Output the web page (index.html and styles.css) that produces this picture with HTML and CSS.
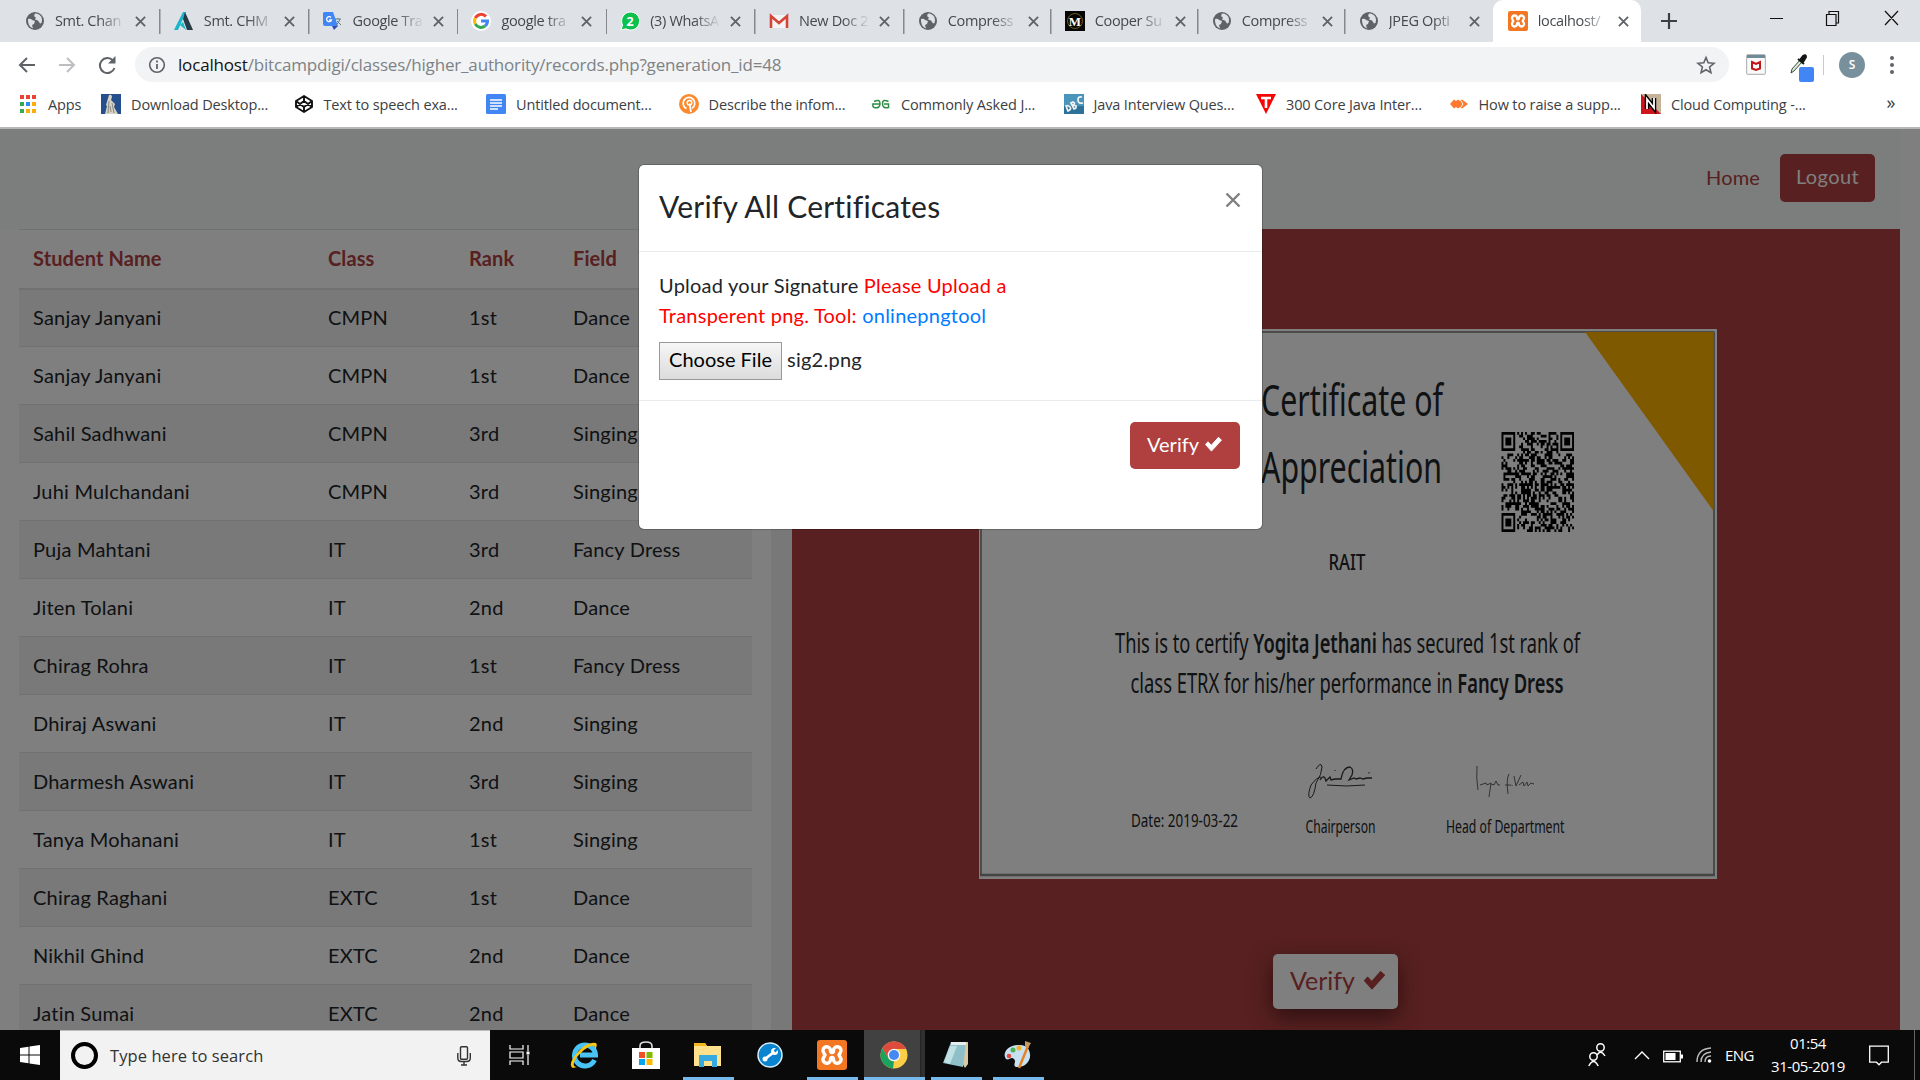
FILE: index.html
```html
<!DOCTYPE html>
<html lang="en">
<head>
<meta charset="utf-8">
<title>Records</title>
<link rel="stylesheet" href="styles.css">
</head>
<body>
<svg class="defs" width="0" height="0">
  <symbol id="globe" viewBox="0 0 20 20"><circle cx="10" cy="10" r="9" fill="#5f6368"/><path d="M3 8q3-1 4 1l3 1-1 3-2 1 1 3.500Q2.500 15.500 3 8zM10 2.500q-2 3 1 4l-1 2 3 1 2 3 1.500-.5Q18.500 5 12.500 2.800z" fill="#dee1e6"/></symbol>
  <symbol id="x" viewBox="0 0 12 12"><path d="M1 1l10 10M11 1L1 11" stroke="#5f6368" stroke-width="2"/></symbol>
  <symbol id="check" viewBox="0 0 20 18"><path d="M1 9.500L3.800 6.500 7.500 10.500 15.500 1.500 19 4.600 7.700 17z" fill="currentColor" stroke="currentColor" stroke-width="1" stroke-linejoin="round"/></symbol>
  <symbol id="xampp" viewBox="0 0 20 20"><rect width="20" height="20" rx="2" fill="#f37623"/><path d="M6.500 4.500a2.500 2.500 0 0 1 2.500 2.500q0 1.400 1 1.400T11 7a2.500 2.500 0 1 1 4.500 1.500l-.8 1.500.8 1.500A2.500 2.500 0 1 1 11 13q0-1.400-1-1.400T9 13a2.500 2.500 0 1 1-4.500-1.500l.8-1.500-.8-1.500a2.500 2.500 0 0 1 2-4z" fill="none" stroke="#fff" stroke-width="2.300"/></symbol>
</svg>

<header class="tabs">
  <div class="tab"><svg class="fav"><use href="#globe"/></svg><span class="tab-title">Smt. Chan</span><svg class="close"><use href="#x"/></svg></div>
  <div class="tab"><svg class="fav" viewBox="0 0 20 20"><path d="M9 1h3L4 19H0z" fill="#19b5cb"/><path d="M11 1l8 18h-6L9 8z" fill="#263c47"/><path d="M6 14l3-3 3 8z" fill="#19b5cb"/></svg><span class="tab-title">Smt. CHM</span><svg class="close"><use href="#x"/></svg></div>
  <div class="tab"><svg class="fav" viewBox="0 0 20 20"><path d="M8 5h9l1 12h-8z" fill="#dce0e4"/><path d="M1 1h9l5 14H2q-2 0-2-2V2z" fill="#4285f4"/><path d="M9 15h6l-4 4z" fill="#3050b8"/><path d="M8 6.500A2.500 2.500 0 1 0 8.500 9H6" fill="none" stroke="#fff" stroke-width="1.300"/><path d="M12 8h6M15 7v1M17 8q-1 4-4 6M14 10l4 4" stroke="#607d8b" fill="none"/></svg><span class="tab-title">Google Tra</span><svg class="close"><use href="#x"/></svg></div>
  <div class="tab"><svg class="fav" viewBox="0 0 20 20"><circle cx="10" cy="10" r="10" fill="#fff"/><g fill="none" stroke-width="3"><path d="M15 5.500A6.500 6.500 0 0 0 4.300 7" stroke="#ea4335"/><path d="M4.300 7a6.500 6.500 0 0 0 0 6" stroke="#fbbc05"/><path d="M4.300 13A6.500 6.500 0 0 0 14 15" stroke="#34a853"/><path d="M14 15a6 6 0 0 0 2.500-5H10" stroke="#4285f4"/></g></svg><span class="tab-title">google tra</span><svg class="close"><use href="#x"/></svg></div>
  <div class="tab"><svg class="fav" viewBox="0 0 20 20"><path d="M1 19l1.500-5A9 9 0 1 1 6 17.800z" fill="#0bc04b" stroke="#fff"/><text x="10" y="14.500" text-anchor="middle" class="fav-num">2</text></svg><span class="tab-title">(3) WhatsA</span><svg class="close"><use href="#x"/></svg></div>
  <div class="tab"><svg class="fav" viewBox="0 0 20 20"><path d="M1 4h18v13H1z" fill="#f3f3f3"/><path d="M2 17V5l8 7 8-7v12" fill="none" stroke="#d54437" stroke-width="2.600"/></svg><span class="tab-title">New Doc 2</span><svg class="close"><use href="#x"/></svg></div>
  <div class="tab"><svg class="fav"><use href="#globe"/></svg><span class="tab-title">Compress</span><svg class="close"><use href="#x"/></svg></div>
  <div class="tab"><svg class="fav" viewBox="0 0 20 20"><path d="M0 0h20v20H0z" fill="#050505"/><circle cx="10" cy="10" r="7.500" fill="none" stroke="#6c5b1c"/><text x="10" y="14.500" text-anchor="middle" class="fav-m">M</text></svg><span class="tab-title">Cooper Su</span><svg class="close"><use href="#x"/></svg></div>
  <div class="tab"><svg class="fav"><use href="#globe"/></svg><span class="tab-title">Compress</span><svg class="close"><use href="#x"/></svg></div>
  <div class="tab"><svg class="fav"><use href="#globe"/></svg><span class="tab-title">JPEG Opti</span><svg class="close"><use href="#x"/></svg></div>
  <div class="tab active"><svg class="fav"><use href="#xampp"/></svg><span class="tab-title">localhost/</span><svg class="close"><use href="#x"/></svg></div>
  <svg class="plus" viewBox="0 0 16 16"><path d="M8 0v16M0 8h16" stroke="#3c4043" stroke-width="2.200"/></svg>
  <svg class="winbtns" viewBox="0 0 130 20"><path d="M1 9.500h13M116 2l13 14M129 2l-13 14M57.500 5.500h9.500v11h-9.500zM60 5V2.500h9.500V14H67" fill="none" stroke="#111" stroke-width="1.200"/></svg>
</header>

<div class="toolbar">
  <svg class="nav-icons" viewBox="0 0 100 20"><g fill="none" stroke-width="2"><path d="M17 10H2M9 3l-7 7 7 7" stroke="#5f6368"/><path d="M41 10h15M49 3l7 7-7 7" stroke="#bcbec1"/><path d="M95 5.500A7.500 7.500 0 1 0 96.500 13" stroke="#5f6368"/></g><path d="M97.500 1v7.500H90z" fill="#5f6368"/></svg>
  <div class="omnibox">
    <svg class="info" viewBox="0 0 18 18"><circle cx="9" cy="9" r="7.300" fill="none" stroke="#5f6368" stroke-width="1.600"/><path d="M9 8v5M9 4.500v2" stroke="#5f6368" stroke-width="1.800"/></svg>
    <span class="url"><b>localhost</b>/bitcampdigi/classes/higher_authority/records.php?generation_id=48</span>
    <svg class="star" viewBox="0 0 20 20"><path d="M10 2.500l2.200 5.300 5.800.5-4.400 3.700 1.300 5.600L10 14.700l-4.900 2.900 1.300-5.600L2 8.300l5.800-.5z" fill="none" stroke="#5f6368" stroke-width="1.600"/></svg>
  </div>
  <svg class="ext" viewBox="0 0 20 21"><rect x=".7" y=".7" width="18.600" height="19.600" rx="1" fill="#fafafa" stroke="#a8a8a8"/><path d="M1 1h18v3H1z" fill="#708b98"/><path d="M6 8l4 2 4-2v6.500l-4 1.500-4-1.500z" fill="none" stroke="#c01818" stroke-width="2"/></svg>
  <svg class="dropper" viewBox="0 0 25 28"><path d="M2 19l1-4 8-9 2 2-8 9z" fill="#dfe9dc" stroke="#344c36"/><path d="M9 5l6 5M11 6l3-4q3-2 3 1l-3 5z" fill="#151515" stroke="#151515" stroke-width="2"/><rect x="10" y="13" width="15" height="15" rx="2" fill="#4285f4"/></svg>
  <i class="tb-sep"></i>
  <span class="avatar">S</span>
  <svg class="dots" viewBox="0 0 4 18"><circle cx="2" cy="2" r="2"/><circle cx="2" cy="9" r="2"/><circle cx="2" cy="16" r="2"/></svg>
</div>

<nav class="bookmarks">
  <div class="bm apps"><svg viewBox="0 0 20 20"><path d="M2 1h4v4H2zM8 1h4v4H8zM14 1h4v4h-4z" fill="#ea4335"/><path d="M2 8h4v4H2z" fill="#34a853"/><path d="M8 8h4v4H8z" fill="#2d8cf5"/><path d="M14 8h4v4h-4zM8 15h4v4H8zM14 15h4v4h-4z" fill="#fbad08"/><path d="M2 15h4v4H2z" fill="#34a853"/></svg><span>Apps</span></div>
  <div class="bm"><svg viewBox="0 0 20 20"><path d="M0 0h20v20H0z" fill="#254f8c"/><path d="M8 1q3-1 3 2l-1 3 4 4-1 3 4 7H4l2-8-1-1z" fill="#d6d2c5"/><path d="M8 7l-1 12M11 9l2 10M9 12l1 6" stroke="#8d897c" fill="none"/></svg><span>Download Desktop...</span></div>
  <div class="bm"><svg viewBox="0 0 20 20"><path d="M10 2l8 5v6l-8 5-8-5V7zM10 2v5M10 13v5M2 7l8 6 8-6M2 13l8-6 8 6" fill="none" stroke="#111" stroke-width="1.900" stroke-linejoin="round"/></svg><span>Text to speech exa...</span></div>
  <div class="bm"><svg viewBox="0 0 20 20"><rect width="20" height="20" rx="1.500" fill="#4285f4"/><path d="M4 6h12M4 9h12M4 12h12M4 15h8" stroke="#fff" stroke-width="1.400"/></svg><span>Untitled document...</span></div>
  <div class="bm"><svg viewBox="0 0 20 20"><circle cx="10" cy="10" r="10" fill="#fb8a2e"/><path d="M7.500 14.500a5.800 5.800 0 1 1 5.500-.3" fill="none" stroke="#fff" stroke-width="1.700"/><path d="M10.500 9.500L12 18" stroke="#fff" stroke-width="1.700"/><circle cx="10.500" cy="8.800" r="2.300" fill="none" stroke="#fff" stroke-width="1.400"/></svg><span>Describe the infom...</span></div>
  <div class="bm"><svg viewBox="0 0 20 20"><path d="M3 7.500q6-3 6 2.200T3 13.500Q1.500 12.500 1.800 10H9M17.500 7.500q-6-3-6 2.200t6 3.800V10H13" fill="none" stroke="#2f8d46" stroke-width="1.500"/></svg><span>Commonly Asked J...</span></div>
  <div class="bm"><svg viewBox="0 0 20 20"><path d="M0 0h20v20H0z" fill="#4a96bb"/><path d="M0 12h20v8H0z" fill="#2c7198"/><g fill="none" stroke="#f2f2f2" stroke-width="1.700"><path d="M2 12l2 5q4-2 2-4t-4-1zM7 9l3 6q3-1 2-3l-3-1q3-2 0-3zM18 3q-4-1-4 3t5 3"/></g></svg><span>Java Interview Ques...</span></div>
  <div class="bm"><svg viewBox="0 0 20 20"><path d="M0 0h20L10 20z" fill="#f60505"/><path d="M5 4h10M10 4v10" stroke="#fff" stroke-width="2.600"/></svg><span>300 Core Java Inter...</span></div>
  <div class="bm"><svg viewBox="0 0 20 20"><path d="M1 10l4-4.500 2 1.500 2-1.500 2 1.500 2-1.500L19 10l-6 4.500-2-1.500-2 1.500L7 13l-2 1.500z" fill="#ff7a2e"/><path d="M12 7l2 3-2 3" stroke="#fff" fill="none"/></svg><span>How to raise a supp...</span></div>
  <div class="bm"><svg viewBox="0 0 20 20"><path d="M0 0h20v20H0z" fill="#c6b297"/><path d="M0 0l20 20H0z" fill="#d0151f"/><path d="M6 15V5l7 9V4" fill="none" stroke="#000" stroke-width="4.500"/><path d="M6 15V5l7 9V4" fill="none" stroke="#fff" stroke-width="1.800"/></svg><span>Cloud Computing -...</span></div>
  <span class="more">»</span>
</nav>

<main class="page">
  <div class="site">
    <div class="navbar"><span class="home">Home</span><span class="logout">Logout</span></div>
    <div class="content">
      <div class="list">
        <table>
          <thead><tr><th class="c1">Student Name</th><th class="c2">Class</th><th class="c3">Rank</th><th>Field</th></tr></thead>
          <tbody>
            <tr><td>Sanjay Janyani</td><td>CMPN</td><td>1st</td><td>Dance</td></tr>
            <tr><td>Sanjay Janyani</td><td>CMPN</td><td>1st</td><td>Dance</td></tr>
            <tr><td>Sahil Sadhwani</td><td>CMPN</td><td>3rd</td><td>Singing</td></tr>
            <tr><td>Juhi Mulchandani</td><td>CMPN</td><td>3rd</td><td>Singing</td></tr>
            <tr><td>Puja Mahtani</td><td>IT</td><td>3rd</td><td>Fancy Dress</td></tr>
            <tr><td>Jiten Tolani</td><td>IT</td><td>2nd</td><td>Dance</td></tr>
            <tr><td>Chirag Rohra</td><td>IT</td><td>1st</td><td>Fancy Dress</td></tr>
            <tr><td>Dhiraj Aswani</td><td>IT</td><td>2nd</td><td>Singing</td></tr>
            <tr><td>Dharmesh Aswani</td><td>IT</td><td>3rd</td><td>Singing</td></tr>
            <tr><td>Tanya Mohanani</td><td>IT</td><td>1st</td><td>Singing</td></tr>
            <tr><td>Chirag Raghani</td><td>EXTC</td><td>1st</td><td>Dance</td></tr>
            <tr><td>Nikhil Ghind</td><td>EXTC</td><td>2nd</td><td>Dance</td></tr>
            <tr><td>Jatin Sumai</td><td>EXTC</td><td>2nd</td><td>Dance</td></tr>
          </tbody>
        </table>
      </div>
      <div class="gutter"></div>
      <section class="preview">
        <svg class="cert" viewBox="979 329 738 550">
          <rect x="979" y="329" width="738" height="550" fill="#fff"/>
          <path d="M981 332H1714.500M981 331V876M1714 332V876" fill="none" stroke="#999" stroke-width="2"/>
          <path d="M980 875H1715" stroke="#888" stroke-width="2.500"/>
          <path d="M1585 332h128.500v179z" fill="#ffb300"/>
          <g class="cert-text">
            <text x="1261" y="416" font-size="43" textLength="182" lengthAdjust="spacingAndGlyphs">Certificate of</text>
            <text x="1261" y="483" font-size="43" textLength="181" lengthAdjust="spacingAndGlyphs">Appreciation</text>
            <text x="1328.500" y="570" font-size="22.500" textLength="37" lengthAdjust="spacingAndGlyphs" class="rait">RAIT</text>
            <text x="1115" y="652.500" font-size="27" textLength="465" lengthAdjust="spacingAndGlyphs">This is to certify <tspan class="strong">Yogita Jethani</tspan> has secured 1st rank of</text>
            <text x="1130.500" y="693" font-size="27" textLength="433" lengthAdjust="spacingAndGlyphs">class ETRX for his/her performance in <tspan class="strong">Fancy Dress</tspan></text>
            <text x="1131" y="827" font-size="17.500" textLength="107" lengthAdjust="spacingAndGlyphs">Date: 2019-03-22</text>
            <text x="1305.500" y="833" font-size="17.500" textLength="70" lengthAdjust="spacingAndGlyphs">Chairperson</text>
            <text x="1446" y="833" font-size="17.500" textLength="118.500" lengthAdjust="spacingAndGlyphs">Head of Department</text>
          </g>
          <g fill="none" stroke="#333" stroke-width="1">
            <path d="M1316 769q5-8 6-2 0 7-6 16-2 14-6 15-3-2 1-13 6-8 10-8"/>
            <path d="M1320 780q3-5 5-2l1 3 4-4 1 3 4-1h6q2-12 9-12 4 2 2 8l-3 5 5-2 2 1 4-1 3 1 4-1h5" stroke-width="1.300"/>
            <path d="M1327 785q20 2 38 0M1335 770v1M1369 772v1.500"/>
            <path d="M1477 766q-1 12 1 24M1480 785l6-2 1 2 4-2-2 14M1491 784l3 1 2-4 2 4h2M1509 774q-3 5-1 20M1505 785h6M1512 785v1M1514 776l2 10 5-11M1519 785l4-3 1 4 3-4 1 4 3-3 3 1" stroke="#555" stroke-width=".9"/>
          </g>
          <g id="qr" transform="translate(1501.500 432) scale(1.960 2.703)"></g>
        </svg>
        <span class="verify-lg">Verify <svg><use href="#check"/></svg></span>
      </section>
    </div>
  </div>
  <div class="backdrop">
    <div class="modal">
      <div class="m-head"><h5>Verify All Certificates</h5><svg class="m-close" viewBox="0 0 16 16"><path d="M1.500 1.500l13 13M14.500 1.500l-13 13" stroke="#7f7f7f" stroke-width="2.400"/></svg></div>
      <div class="m-body">
        <p>Upload your Signature <em>Please Upload a<br>Transperent png. Tool: <a>onlinepngtool</a></em></p>
        <div class="file"><span class="choose">Choose File</span><span class="fname">sig2.png</span></div>
      </div>
      <div class="m-foot"><span class="verify">Verify <svg><use href="#check"/></svg></span></div>
    </div>
  </div>
</main>

<footer class="taskbar">
  <div class="start"><svg viewBox="0 0 20 20"><path d="M0 3l8.500-1.300v7.800H0zM9.500 1.500L20 0v9.500H9.500zM0 10.500h8.500v7.800L0 17zM9.500 10.500H20V20L9.500 18.500z" fill="#fff"/></svg></div>
  <div class="search"><i class="cortana"></i><span>Type here to search</span><svg viewBox="0 0 14 20"><rect x="3.500" y=".7" width="7" height="12.500" rx="1" fill="none" stroke="#333" stroke-width="1.400"/><path d="M.8 7v5q0 3.500 3.500 3.500h5.500q3.500 0 3.500-3.500V7M7 15.500V19M4 19h6" fill="none" stroke="#333" stroke-width="1.400"/></svg></div>
  <div class="app tv"><svg viewBox="0 0 28 28"><path d="M4 4v4h13V4M4 24v-4h13v4M4 11h13v6H4zM22 4v6M22 14v10" fill="none" stroke="#fff" stroke-width="1.200"/><path d="M20.500 10.500h3v3h-3z" fill="#fff"/></svg></div>
  <div class="app"><svg viewBox="0 0 28 28"><path d="M24.500 19A10.500 10.500 0 1 1 25.500 14H10" fill="none" stroke="#49c3f3" stroke-width="5"/><path d="M3 27Q-3 24 7 12T26 2q2 2-1 7 1-5-4-4T6 17Q1 26 7 26z" fill="#f8c416"/></svg></div>
  <div class="app"><svg viewBox="0 0 28 28"><path d="M8 8V5q0-4 6-4t6 4v3" fill="none" stroke="#ddd" stroke-width="1.600"/><path d="M0 7h28v21H0z" fill="#fff"/><path d="M7 11h6v6H7z" fill="#f25022"/><path d="M14.500 11h6v6h-6z" fill="#7fba00"/><path d="M7 18h6v6H7z" fill="#00a4ef"/><path d="M14.500 18h6v6h-6z" fill="#ffb900"/></svg></div>
  <div class="app run"><svg viewBox="0 0 28 28"><path d="M0 2h11l2 3h14v20H0z" fill="#ffe18b"/><path d="M0 2h11l2 3H0z" fill="#f0b81f"/><path d="M5 14h18v12h-5v-6h-8v6H5z" fill="#36a9e1"/></svg></div>
  <div class="app"><svg viewBox="0 0 28 28"><circle cx="14" cy="14" r="12" fill="#0b84cf" stroke="#d8eefa" stroke-width="1.500"/><path d="M9 18l9-7" stroke="#fff" stroke-width="2.800"/><circle cx="9" cy="18" r="2.500" fill="#fff"/><circle cx="18.500" cy="10.500" r="3.500" fill="#fff"/><path d="M18.500 10.500l4-4" stroke="#0b84cf" stroke-width="2.500"/></svg></div>
  <div class="app run"><svg class="big"><use href="#xampp"/></svg></div>
  <div class="app run chrome"><svg viewBox="0 0 28 28"><circle cx="14" cy="14" r="13.500" fill="#fbcf45"/><path d="M2.300 7.200A13.500 13.500 0 0 1 26 8H14L8 17z" fill="#dc4b3e"/><path d="M2.300 7.200L8.500 17.500 14 20l-1 7.500A13.500 13.500 0 0 1 2.300 7.200z" fill="#1ba160"/><circle cx="14" cy="14" r="6.300" fill="#f5f5f5"/><circle cx="14" cy="14" r="5" fill="#4688f1"/></svg></div>
  <div class="app run"><svg viewBox="0 0 28 28"><path d="M9 2l17-1v22l-3 4z" fill="#d8cba4"/><path d="M9 1h15l-3 25-20-4z" fill="#8fc0c9"/><path d="M9 1h15v3H9z" fill="#e8eeee"/><path d="M8 5h7L8 23l-6-2z" fill="#c1e0e4"/></svg></div>
  <div class="app run"><svg viewBox="0 0 28 28"><path d="M14 4C3 4-2 13 2 18c3 2 5-3 8 0s-2 6 2 8c8 1 15-5 14-13S20 4 14 4z" fill="#c7e1f2"/><circle cx="5" cy="15" r="2.300" fill="#e3493f"/><circle cx="9" cy="9" r="2.500" fill="#52b157"/><circle cx="15" cy="7" r="2.500" fill="#f3b126"/><path d="M24 5l-9 22" stroke="#e68325" stroke-width="2.500"/><path d="M21 0l6 2-3 5-3-2z" fill="#c49a62"/></svg></div>
  <div class="tray">
    <svg class="people" viewBox="0 0 18 24"><g fill="none" stroke="#fff" stroke-width="1.500"><circle cx="12.500" cy="4.500" r="3.700"/><path d="M9 12q4-6 8 1"/><circle cx="5.500" cy="13.500" r="3.700"/><path d="M.8 23q4.700-9 9.400 0"/></g></svg>
    <svg class="caret" viewBox="0 0 16 10"><path d="M1 9l7-7 7 7" fill="none" stroke="#fff" stroke-width="1.400"/></svg>
    <svg class="batt" viewBox="0 0 20 12"><rect x=".7" y=".7" width="16.600" height="10.600" fill="none" stroke="#fff" stroke-width="1.300"/><path d="M2.500 2.500h10v7h-10zM18 4h2v4h-2z" fill="#fff"/></svg>
    <svg class="wifi" viewBox="0 0 16 16"><g fill="none" stroke="#bbb" stroke-width="1.400"><path d="M1 15Q1 2 15 1M5 15Q5 6 15 5M9 15q0-6 6-6"/></g><circle cx="13.500" cy="14" r="1.800" fill="#fff"/></svg>
    <span class="eng">ENG</span>
    <span class="clock">01:54<br>31-05-2019</span>
    <svg class="note" viewBox="0 0 20 20"><path d="M.7.700h18.600v16H12.500L10 19.300 7.500 16.700H.7z" fill="none" stroke="#fff" stroke-width="1.300"/></svg>
    <i class="peek"></i>
  </div>
</footer>
<script src="script.js"></script>
</body>
</html>
```
FILE: styles.css
```css
* { box-sizing: border-box; }
body { margin: 0; width: 1920px; height: 1080px; overflow: hidden; display: flex; flex-direction: column; font-family: "Open Sans", "Noto Sans", sans-serif; background: #fff; }
svg { flex: none; display: block; }
.defs { display: none; }

/* tab strip */
.tabs { height: 42px; flex: none; background: #dee1e6; display: flex; align-items: center; padding-left: 12px; }
.tab { width: 147px; height: 42px; flex: none; display: flex; align-items: center; padding-left: 13px; background: linear-gradient(#85888c, #85888c) right 0 center / 1.500px 25px no-repeat; }
.tab:nth-child(-n+6) { width: 148.800px; }
.tab:nth-child(10) { background: none; }
.tab.active { width: 148px; padding-left: 15px; background: #fff; border-radius: 10px 10px 0 0; }
.fav { width: 20px; height: 20px; margin-right: 10px; }
.tab-title { width: 71px; white-space: nowrap; font-size: 14.500px; line-height: 20px; letter-spacing: -.35px; color: #45494d; margin-top: -1px; -webkit-mask-image: linear-gradient(90deg, #000 62%, transparent 100%); }
.close { width: 11px; height: 11px; margin-left: 9px; }
.fav-num { font: bold 13px "Open Sans", sans-serif; fill: #fff; }
.fav-m { font: bold 13px "Liberation Serif", serif; fill: #fff; }
.plus { width: 16px; height: 16px; margin-left: 20px; }
.winbtns { width: 130px; height: 20px; margin-left: 92px; margin-bottom: 4px; }

/* toolbar */
.toolbar { height: 45px; flex: none; display: flex; align-items: center; padding-left: 18px; background: #fff; }
.nav-icons { width: 100px; height: 20px; }
.omnibox { width: 1594px; height: 35px; margin-left: 17px; border-radius: 18px; background: #f1f3f4; display: flex; align-items: center; padding: 0 13px; }
.info { width: 18px; height: 18px; }
.url { flex: 1; margin-left: 12px; font-size: 17px; letter-spacing: -.17px; color: #7d8287; white-space: nowrap; }
.url b { font-weight: 400; color: #111; }
.star { width: 20px; height: 20px; }
.ext { width: 20px; height: 21px; margin-left: 17px; }
.dropper { width: 25px; height: 28px; margin: 7px 0 0 23px; }
.tb-sep { width: 1px; height: 20px; background: #c8cacd; margin-left: 9px; }
.avatar { width: 26px; height: 26px; border-radius: 50%; background: #78909c; color: #fff; font-size: 12px; font-weight: 600; line-height: 26px; text-align: center; margin-left: 15px; }
.dots { width: 4px; height: 18px; margin-left: 25px; fill: #5f6368; }

/* bookmarks */
.bookmarks { height: 42px; flex: none; display: flex; align-items: center; padding: 0 0 6px 18px; border-bottom: 2px solid #b4b6b8; font-size: 14.500px; letter-spacing: -.14px; color: #3c4043; }
.bm { width: 192.500px; flex: none; display: flex; align-items: center; gap: 10px; white-space: nowrap; }
.bm svg { width: 20px; height: 20px; overflow: hidden; }
.bm.apps { width: 83px; }
.more { font-size: 18px; margin-left: 53px; margin-top: -5px; }

/* page */
.page { height: 901px; flex: none; position: relative; overflow: hidden; font-family: Lato, "Noto Sans", sans-serif; font-size: 20px; color: #212529; }
.site { width: 1900px; }
.navbar { height: 100px; background: #f6fcf9; display: flex; align-items: flex-start; justify-content: flex-end; padding: 25px 25px 0 0; }
.home { color: #b04040; line-height: 46px; margin-right: 20px; letter-spacing: .15px; }
.logout { width: 95px; height: 48px; line-height: 45px; letter-spacing: .4px; border-radius: 5px; background: #b04040; color: #fff; text-align: center; }
.content { display: flex; height: 801px; overflow: hidden; }
.list { width: 771px; padding-left: 19px; }
.gutter { width: 21px; background: #f1f1f1; }
table { width: 733px; border-collapse: collapse; table-layout: fixed; }
th, td { text-align: left; padding: 0 15px 2px 14px; height: 58px; line-height: 30px; border-top: 1.500px solid #dee2e6; letter-spacing: .2px; }
th { color: #b04040; height: 59px; border-bottom: 2px solid #dee2e6; letter-spacing: .1px; }
.c1 { width: 295px; } .c2 { width: 141px; } .c3 { width: 104px; }
tbody tr:nth-child(odd) { background: #f2f2f2; }
.preview { width: 1108px; background: #b04040; display: flex; flex-direction: column; align-items: flex-start; padding: 100px 0 0 187px; }
.cert { width: 738px; height: 550px; }
.cert-text { font-family: "Noto Sans", sans-serif; fill: #212529; }
.rait { font-weight: 500; }
.strong { font-weight: 600; }
.verify-lg { display: flex; align-items: center; gap: 8px; width: 125px; height: 55px; margin: 75px 0 0 294px; padding: 0 0 3px 17px; background: #fff; color: #b04040; border-radius: 5px; font-size: 25px; box-shadow: 0 8px 22px rgba(0,0,0,.5); }
.verify-lg svg { width: 23px; height: 20px; }

/* dialog */
.backdrop { position: absolute; inset: 0; background: rgba(0,0,0,.5); }
.modal { width: 625px; height: 366px; margin: 35px 0 0 638px; background: #fff; border: 1px solid rgba(0,0,0,.2); background-clip: padding-box; border-radius: 6px; }
.m-head { height: 87px; border-bottom: 1px solid #e9ecef; display: flex; justify-content: space-between; padding: 19px 21px 0 20px; }
.m-head h5 { margin: 0; font-weight: 400; font-size: 30px; line-height: 44px; letter-spacing: .2px; }
.m-close { width: 16px; height: 16px; margin-top: 8px; }
.m-body { height: 149px; border-bottom: 1px solid #e9ecef; padding: 18px 20px 0; }
.m-body p { margin: 0; line-height: 30px; letter-spacing: .23px; }
.m-body em { font-style: normal; color: #f00; }
.m-body a { color: #007bff; }
.file { display: flex; align-items: center; gap: 5px; margin-top: 12px; }
.choose { width: 123px; height: 38px; line-height: 33px; text-align: center; color: #000; border: 1px solid #999; background: linear-gradient(#f6f6f6, #dcdcdc); }
.fname { margin-top: -4px; letter-spacing: .25px; }
.m-foot { display: flex; justify-content: flex-end; padding: 21px 22px 0; }
.verify { width: 110px; height: 47px; display: flex; align-items: center; gap: 5px; padding: 0 0 3px 17px; border-radius: 5px; background: #b04040; color: #fff; }
.verify svg { width: 19px; height: 16px; }

/* taskbar */
.taskbar { height: 50px; flex: none; background: #0a0a0a; display: flex; color: #fff; }
.start { width: 60px; padding: 15px 0 0 20px; }
.start svg { width: 20px; height: 20px; }
.search { width: 430px; background: #f2f2f2; border-top: 1px solid #bbb; display: flex; align-items: center; padding-left: 11px; color: #333; font-size: 16.500px; letter-spacing: .08px; }
.search span { flex: 1; margin-left: 12px; }
.search svg { width: 14px; height: 20px; margin-right: 19px; }
.cortana { width: 27px; height: 27px; border: 4px solid #000; border-radius: 50%; }
.app { width: 51px; height: 50px; margin-right: 11px; display: flex; justify-content: center; align-items: center; padding-right: 2px; }
.app svg { width: 28px; height: 28px; }
.app svg.big { width: 30px; height: 30px; }
.app.tv { margin-left: 7px; padding-right: 5px; }
.run { border-bottom: 3px solid #76b9ed; }
.run svg { margin-top: 3px; }
.app.chrome { width: 61px; margin: 0 6px 0 -5px; background: linear-gradient(90deg, #414141 56px, #222 56px, #303030 58px); }
.tray { flex: 1; display: flex; align-items: center; justify-content: flex-end; }
.people { width: 18px; height: 24px; }
.caret { width: 16px; height: 10px; margin-left: 28px; }
.batt { width: 20px; height: 13px; margin: 2px 0 0 13px; }
.wifi { width: 16px; height: 16px; margin-left: 13px; }
.eng { width: 30px; font-size: 15px; letter-spacing: -.6px; margin-left: 13px; }
.clock { width: 80px; margin-left: 13px; text-align: center; font-size: 15px; letter-spacing: -.45px; line-height: 23px; white-space: nowrap; }
.note { width: 20px; height: 21px; margin-left: 21px; }
.peek { width: 1px; height: 50px; background: #666; margin: 0 5px 0 25px; }
```
FILE: script.js
```js
// Draws the certificate's QR code, 37 x 37 modules, as one path.
(function () {
  var n = 37, seed = 48, d = "";
  function rnd() { seed = (seed * 1103515245 + 12345) % 2147483648; return seed / 2147483648; }
  function finder(x, y, fx, fy) {
    var i = x - fx, j = y - fy;
    if (i < -1 || j < -1 || i > 7 || j > 7) return null;
    if (i < 0 || j < 0 || i > 6 || j > 6) return false;
    return i === 0 || j === 0 || i === 6 || j === 6 || (i > 1 && i < 5 && j > 1 && j < 5);
  }
  for (var y = 0; y < n; y++) {
    for (var x = 0; x < n; x++) {
      var r = rnd() > 0.48, f = finder(x, y, 0, 0);
      if (f === null) f = finder(x, y, n - 7, 0);
      if (f === null) f = finder(x, y, 0, n - 7);
      if (f === null ? r : f) d += "M" + x + " " + y + "h1v1h-1z";
    }
  }
  var p = document.createElementNS("http://www.w3.org/2000/svg", "path");
  p.setAttribute("d", d);
  document.getElementById("qr").appendChild(p);
})();
```
